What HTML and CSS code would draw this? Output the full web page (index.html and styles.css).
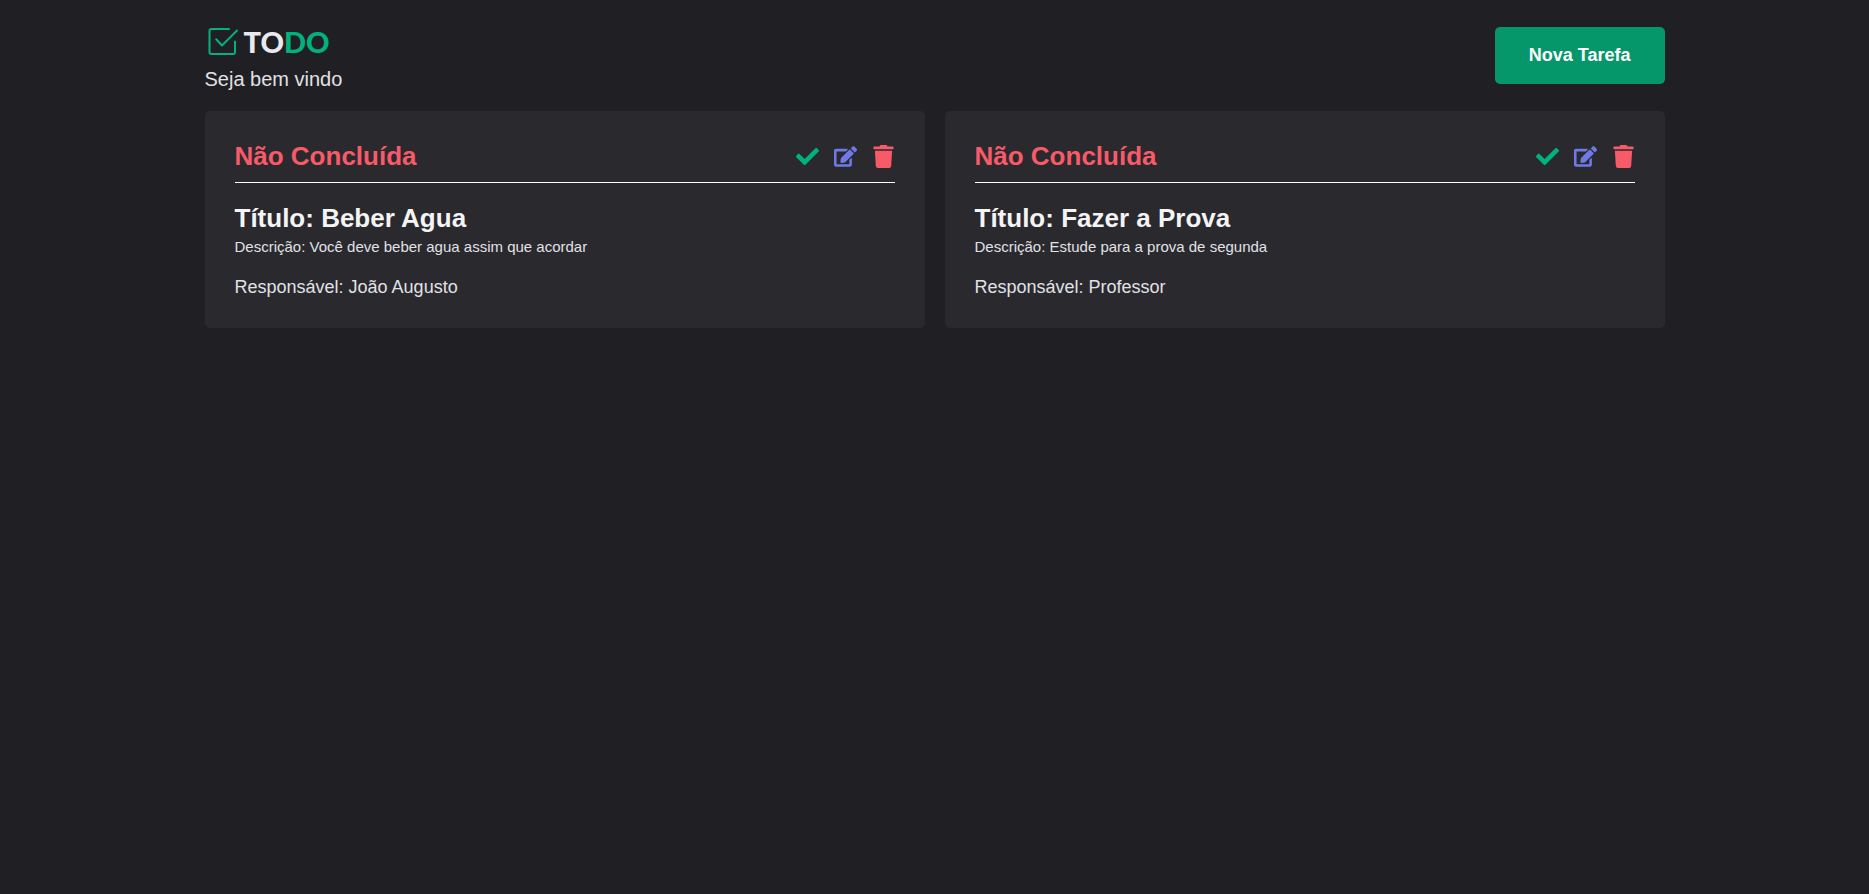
FILE: index.html
```html
<!DOCTYPE html>
<html lang="pt-BR">
<head>
  <meta charset="utf-8">
  <meta name="viewport" content="width=device-width, initial-scale=1">
  <title>TODO</title>
  <link rel="stylesheet" href="styles.css">
</head>
<body>
  <svg class="sprite" aria-hidden="true">
    <symbol id="check" viewBox="0 0 512 512"><path d="M173.898 439.404l-166.4-166.4c-9.997-9.997-9.997-26.206 0-36.204l36.203-36.204c9.997-9.998 26.207-9.998 36.204 0L192 312.69 432.095 72.596c9.997-9.997 26.207-9.997 36.204 0l36.203 36.204c9.997 9.997 9.997 26.206 0 36.204l-294.4 294.401c-9.998 9.997-26.207 9.997-36.204-.001z"/></symbol>
    <symbol id="edit" viewBox="0 0 576 512"><path d="M402.6 83.2l90.2 90.2c3.8 3.8 3.8 10 0 13.8L274.4 405.6l-92.8 10.3c-12.4 1.4-22.9-9.1-21.5-21.5l10.3-92.8L388.8 83.2c3.8-3.8 10-3.8 13.8 0zm162-22.9l-48.8-48.8c-15.2-15.2-39.9-15.2-55.2 0l-35.4 35.4c-3.8 3.8-3.8 10 0 13.8l90.2 90.2c3.8 3.8 10 3.8 13.8 0l35.4-35.4c15.2-15.3 15.2-40 0-55.2zM384 346.2V448H64V128h229.8c3.2 0 6.2-1.3 8.5-3.5l40-40c7.6-7.6 2.2-20.5-8.5-20.5H48C21.5 64 0 85.5 0 112v352c0 26.5 21.5 48 48 48h352c26.5 0 48-21.5 48-48V306.2c0-10.7-12.9-16-20.5-8.5l-40 40c-2.2 2.3-3.5 5.3-3.5 8.5z"/></symbol>
    <symbol id="trash" viewBox="0 0 448 512"><path d="M432 32H312l-9.4-18.7A24 24 0 0 0 281.1 0H166.8a23.72 23.72 0 0 0-21.4 13.3L136 32H16A16 16 0 0 0 0 48v32a16 16 0 0 0 16 16h416a16 16 0 0 0 16-16V48a16 16 0 0 0-16-16zM53.2 467a48 48 0 0 0 47.9 45h245.8a48 48 0 0 0 47.9-45L416 128H32z"/></symbol>
  </svg>

  <div class="container">
    <header class="header">
      <div class="brand">
        <div class="logo">
          <svg class="logo-icon" viewBox="0 0 34 34" aria-hidden="true">
            <path d="M24 5H6.5Q4.5 5 4.5 7V28Q4.5 30 6.5 30H28Q30 30 30 28V17.5"/>
            <path d="M11.2 15.2L17 21.5L32 6.5"/>
          </svg>
          <span class="logo-text">TO<span class="logo-accent">DO</span></span>
        </div>
        <p class="welcome">Seja bem vindo</p>
      </div>
      <button class="new-task" type="button">Nova Tarefa</button>
    </header>

    <main class="tasks">
      <article class="task">
        <div class="task-top">
          <h2 class="status">Não Concluída</h2>
          <div class="actions">
            <button class="action action-check" type="button" aria-label="Concluir"><svg class="icon"><use href="#check"/></svg></button>
            <button class="action action-edit" type="button" aria-label="Editar"><svg class="icon"><use href="#edit"/></svg></button>
            <button class="action action-delete" type="button" aria-label="Excluir"><svg class="icon"><use href="#trash"/></svg></button>
          </div>
        </div>
        <h2 class="title">Título: Beber Agua</h2>
        <p class="description">Descrição: Você deve beber agua assim que acordar</p>
        <p class="owner">Responsável: João Augusto</p>
      </article>

      <article class="task">
        <div class="task-top">
          <h2 class="status">Não Concluída</h2>
          <div class="actions">
            <button class="action action-check" type="button" aria-label="Concluir"><svg class="icon"><use href="#check"/></svg></button>
            <button class="action action-edit" type="button" aria-label="Editar"><svg class="icon"><use href="#edit"/></svg></button>
            <button class="action action-delete" type="button" aria-label="Excluir"><svg class="icon"><use href="#trash"/></svg></button>
          </div>
        </div>
        <h2 class="title">Título: Fazer a Prova</h2>
        <p class="description">Descrição: Estude para a prova de segunda</p>
        <p class="owner">Responsável: Professor</p>
      </article>
    </main>
  </div>
</body>
</html>
```
FILE: styles.css
```css
* {
  margin: 0;
  padding: 0;
  box-sizing: border-box;
}

body {
  background: #202024;
  color: #e1e1e6;
  font-family: "Liberation Sans", Arial, sans-serif;
}

.sprite {
  display: none;
}

.container {
  max-width: 1500px;
  margin: 0 auto;
  padding: 20px;
}

.header {
  display: flex;
  align-items: center;
  justify-content: space-between;
  margin-bottom: 20px;
}

.logo {
  display: flex;
  align-items: flex-start;
  gap: 5px;
  padding: 4px 0 8px;
}

.logo-icon {
  width: 34px;
  height: 34px;
  fill: none;
  stroke: #00b37e;
  stroke-width: 2;
  stroke-linecap: round;
  stroke-linejoin: round;
}

.logo-text {
  color: #e8eaed;
  font-family: Lato, sans-serif;
  font-size: 29px;
  font-weight: 900;
  line-height: 36px;
}

.logo-accent {
  color: #00b37e;
}

.welcome {
  font-size: 20px;
  line-height: 23px;
}

.new-task {
  padding: 18px 34px;
  border: 0;
  border-radius: 5px;
  background: #059669;
  color: #fff;
  font-family: inherit;
  font-size: 18px;
  font-weight: 700;
  line-height: 21px;
  cursor: pointer;
}

.tasks {
  display: grid;
  grid-template-columns: repeat(auto-fit, minmax(400px, 1fr));
  gap: 20px;
}

.task {
  padding: 30px;
  border-radius: 5px;
  background: #29292e;
}

.task-top {
  display: flex;
  align-items: center;
  justify-content: space-between;
  margin-bottom: 20px;
  padding-bottom: 10px;
  border-bottom: 1px solid #fff;
}

.status {
  color: #f75a68;
  font-size: 26px;
  line-height: 31px;
}

.actions {
  display: flex;
  gap: 15px;
}

.action {
  display: flex;
  border: 0;
  background: none;
  cursor: pointer;
}

.action-check {
  color: #00b37e;
}

.action-edit {
  color: #6f79e8;
}

.action-delete {
  color: #f75a68;
}

.icon {
  width: 23px;
  height: 23px;
  fill: currentColor;
}

.title {
  margin-bottom: 5px;
  color: #f4f4f4;
  font-size: 26px;
  line-height: 30px;
}

.description {
  margin-bottom: 22px;
  font-size: 15px;
  line-height: 17px;
}

.owner {
  font-size: 18px;
  line-height: 21px;
}
```
